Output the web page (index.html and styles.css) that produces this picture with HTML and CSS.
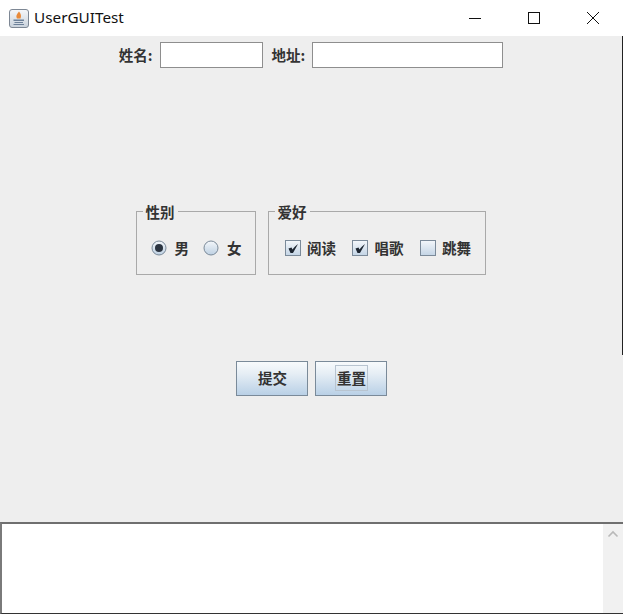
FILE: index.html
```html
<!DOCTYPE html>
<html lang="zh">
<head>
<meta charset="utf-8">
<title>UserGUITest</title>
<link rel="stylesheet" href="styles.css">
</head>
<body>
<div class="window">
  <header class="titlebar">
    <div class="title">
      <svg class="app-icon" width="20" height="19" viewBox="0 0 20 19">
        <defs><linearGradient id="ig" x1="0" y1="0" x2="0" y2="1"><stop offset="0" stop-color="#f6f7f9"/><stop offset="1" stop-color="#c9d2dc"/></linearGradient></defs>
        <rect x="0.500" y="0.500" width="19" height="18" rx="2.500" fill="url(#ig)" stroke="#7d8794"/>
        <path d="M10 2.500c2 2.500 2.500 4.500 1.500 7h-3.500c-1.500-2.500 0-4.500 2-7z" fill="#e98a3a"/>
        <path d="M4.500 10.500h10.500v1.500h-10.500zM5.500 13h8.500v1h-8.500zM4.500 15h10.500v1h-10.500z" fill="#6d8199"/>
      </svg>
      <span>UserGUITest</span>
    </div>
    <div class="controls">
      <svg width="14" height="14" viewBox="0 0 14 14"><path d="M1 7.500h12" stroke="#111" fill="none"/></svg>
      <svg width="14" height="14" viewBox="0 0 14 14"><rect x="1.500" y="1.500" width="11" height="11" stroke="#111" fill="none"/></svg>
      <svg width="14" height="14" viewBox="0 0 14 14"><path d="M1 1l12 12M13 1l-12 12" stroke="#111" fill="none"/></svg>
    </div>
  </header>
  <main class="content">
    <span class="edge"></span>
    <div class="fields">
      <label class="field-label" for="name">姓名:</label>
      <input class="input input-name" id="name" type="text">
      <label class="field-label label-gap" for="addr">地址:</label>
      <input class="input input-addr" id="addr" type="text">
    </div>
    <div class="groups">
      <fieldset class="group group-gender">
        <legend>性别</legend>
        <span class="opt opt-radio">
          <svg width="16" height="16" viewBox="0 0 16 16"><defs><linearGradient id="rg" x1="0" y1="0" x2="0" y2="1"><stop offset="0" stop-color="#f4f7fa"/><stop offset="1" stop-color="#bdd0e2"/></linearGradient></defs><circle cx="8" cy="8" r="7" fill="url(#rg)" stroke="#7b8a99"/><circle cx="8" cy="8" r="4" fill="#2b3440"/></svg>
          <span>男</span>
        </span>
        <span class="opt opt-radio">
          <svg width="16" height="16" viewBox="0 0 16 16"><circle cx="8" cy="8" r="7" fill="url(#rg)" stroke="#7b8a99"/></svg>
          <span>女</span>
        </span>
      </fieldset>
      <fieldset class="group group-hobby">
        <legend>爱好</legend>
        <span class="opt opt-check">
          <svg width="16" height="16" viewBox="0 0 16 16"><defs><linearGradient id="cg" x1="0" y1="0" x2="0" y2="1"><stop offset="0" stop-color="#f4f7fa"/><stop offset="1" stop-color="#c3d4e5"/></linearGradient></defs><rect x="0.500" y="0.500" width="15" height="15" fill="url(#cg)" stroke="#7b8a99"/><path d="M3.500 8.500L6.500 7.500L7.500 9.500C9 7.500 11 5.500 13 4C11.500 7 9.500 10 8 13L5.500 13Z" fill="#1d2530"/></svg>
          <span>阅读</span>
        </span>
        <span class="opt opt-check">
          <svg width="16" height="16" viewBox="0 0 16 16"><rect x="0.500" y="0.500" width="15" height="15" fill="url(#cg)" stroke="#7b8a99"/><path d="M3.500 8.500L6.500 7.500L7.500 9.500C9 7.500 11 5.500 13 4C11.500 7 9.500 10 8 13L5.500 13Z" fill="#1d2530"/></svg>
          <span>唱歌</span>
        </span>
        <span class="opt opt-check">
          <svg width="16" height="16" viewBox="0 0 16 16"><rect x="0.500" y="0.500" width="15" height="15" fill="url(#cg)" stroke="#7b8a99"/></svg>
          <span>跳舞</span>
        </span>
      </fieldset>
    </div>
    <div class="actions">
      <button class="btn" type="button">提交</button>
      <button class="btn" type="button"><span class="focus">重置</span></button>
    </div>
  </main>
  <section class="log">
    <div class="log-text"></div>
    <div class="scrollbar">
      <svg width="12" height="8" viewBox="0 0 12 8"><path d="M1.500 6.500l4.500-4.500l4.500 4.500" stroke="#b9b9b9" stroke-width="1.600" fill="none"/></svg>
    </div>
  </section>
</div>
</body>
</html>
```

FILE: styles.css
```css
* { box-sizing: border-box; }
html, body { margin: 0; height: 100%; }
body { font-family: "Noto Sans CJK SC", "Noto Sans", sans-serif; color: #333; overflow: hidden; }
.window { width: 623px; height: 614px; display: flex; flex-direction: column; background: #fff; }
.titlebar { height: 36px; flex: none; display: flex; align-items: center; justify-content: space-between; background: #fff; }
.title { display: flex; align-items: center; gap: 5px; padding-left: 9px; font: 15.300px/20px "Noto Sans", sans-serif; color: #111; }
.title span { position: relative; top: -1px; }
.app-icon { display: block; }
.controls { display: flex; gap: 45px; padding-right: 23px; }
.controls svg { display: block; }
.content { position: relative; flex: 1; display: flex; flex-direction: column; align-items: center; background: #eeeeee; padding-top: 6px; padding-right: 1px; }
.edge { position: absolute; top: 0; right: 0; width: 1px; height: 319px; background: #222; }
.fields { display: flex; align-items: center; height: 26px; }
.field-label { font-size: 14.500px; font-weight: 600; line-height: 26px; color: #333; }
.label-gap { margin-left: 9px; }
.input { height: 26px; margin: 0 0 0 7px; border: 1px solid #8e8e8e; background: #fff; padding: 0; }
.input-name { width: 103px; }
.input-addr { width: 191px; }
.groups { display: flex; gap: 12px; margin-top: 135px; margin-left: -1px; }
.group { margin: 0; height: 72px; min-width: 0; border: 1px solid #a9a9a9; display: flex; align-items: center; padding: 0; }
.group legend { position: relative; top: 1px; margin-left: -8px; padding: 0 3px; font-size: 14.500px; line-height: 16px; font-weight: 600; color: #333; }
.group-gender { width: 120px; padding: 2px 0 0 14px; gap: 14px; }
.group-hobby { width: 218px; padding: 2px 0 0 16px; gap: 16px; }
.group-hobby legend { margin-left: -10px; }
.opt { display: inline-flex; align-items: center; font-size: 14.500px; font-weight: 600; line-height: 18px; }
.opt svg { display: block; flex: none; }
.opt-radio { gap: 8px; }
.opt-check { gap: 6.500px; }
.actions { display: flex; gap: 7px; margin-top: 86px; }
.btn { width: 72px; height: 35px; padding: 0 0 2px 2px; border: 1px solid #7a8a99; background: linear-gradient(#f7fafc, #e6eef5 35%, #b9d0e6); font: 600 14.500px/18px "Noto Sans CJK SC", sans-serif; color: #333; display: flex; align-items: center; justify-content: center; }
.focus { outline: 1px solid #b8c4d0; padding: 3px 1px; }
.log { height: 92px; flex: none; display: flex; border-top: 2px solid #6f6f6f; border-left: 2px solid #7a7a7a; border-bottom: 1px solid #333; background: #fff; }
.log-text { flex: 1; }
.scrollbar { width: 20px; background: #f1f1f1; display: flex; justify-content: center; padding-top: 6px; }
.scrollbar svg { display: block; }
```
